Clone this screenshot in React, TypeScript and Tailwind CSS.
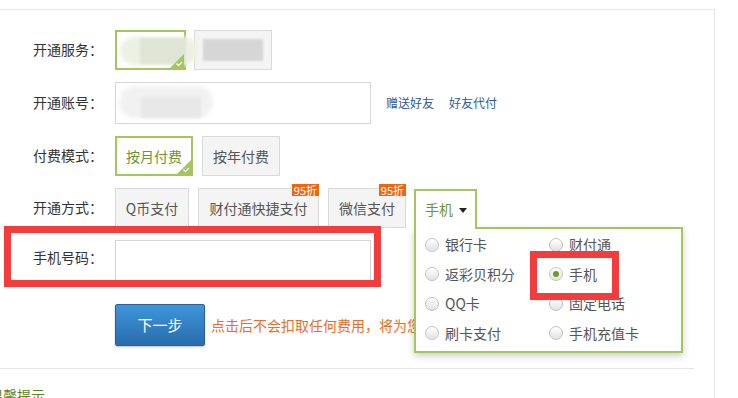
import React from "react";

const GREEN = "border-[#a3c65e]";

const Corner: React.FC = () => (
  <svg className="absolute right-0 bottom-0" width="14" height="14" viewBox="0 0 14 14">
    <polygon points="14,0 14,14 0,14" fill="#a3c65e" />
    <polyline points="6.5,9.5 8.5,11.5 12,8" fill="none" stroke="#fff" strokeWidth="1.3" />
  </svg>
);

const Badge: React.FC = () => (
  <span className="absolute right-[-1px] top-[-5px] h-[12px] px-[2px] bg-[#f0650e] text-white text-[11px] leading-[12px]">
    95折
  </span>
);

const Radio: React.FC<{ label: string; checked?: boolean }> = ({ label, checked }) => (
  <div className="flex items-center h-[29.5px]">
    <span className="w-[14px] h-[14px] rounded-full border border-[#c2c2c2] bg-linear-to-b from-white to-[#e2e2e2] flex items-center justify-center">
      {checked && <span className="w-[6px] h-[6px] rounded-full bg-[#6b9a2a]" />}
    </span>
    <span className="ml-[6px] text-[14px] text-[#555]">{label}</span>
  </div>
);

const Label: React.FC<{ text: string; up?: string }> = ({ text, up = "-mt-[2px]" }) => (
  <div className={`w-[115px] pl-[33px] text-[14px] text-[#333] shrink-0 ${up}`}>{text}</div>
);

const Opt: React.FC<{ text: string; w: string; badge?: boolean }> = ({ text, w, badge }) => (
  <div
    className={`relative ${w} h-[40px] flex items-center justify-center border border-[#dadada] bg-[#f4f4f4] text-[14px] text-[#555]`}
  >
    {text}
    {badge && <Badge />}
  </div>
);

export default function App() {
  const radios: [string, boolean][] = [
    ["银行卡", false],
    ["财付通", false],
    ["返彩贝积分", false],
    ["手机", true],
    ["QQ卡", false],
    ["固定电话", false],
    ["刷卡支付", false],
    ["手机充值卡", false],
  ];

  return (
    <div className="relative w-[738px] h-[398px] overflow-hidden bg-white font-['Microsoft_YaHei','Noto_Sans_CJK_SC',sans-serif]">
      <div className="mt-[9px] w-[715px] h-[389px] border-t border-r border-[#e6e6e6]">
        <div className="pt-[20px]">
          {/* 开通服务 */}
          <div className="flex items-center h-[40px]">
            <Label text="开通服务：" />
            <div className={`relative w-[71px] h-[40px] border-2 ${GREEN} bg-white`}>
              <div className="absolute left-[3px] top-[5px] w-[78px] h-[28px] rounded-full bg-[#edf1e3] blur-[2px]" />
              <div className="absolute left-[23px] top-[6px] w-[46px] h-[26px] bg-[#dfe4d5] blur-[1px]" />
              <Corner />
            </div>
            <div className="ml-[8px] w-[78px] h-[40px] border border-[#dadada] bg-[#f4f4f4] flex items-center justify-center">
              <div className="w-[60px] h-[22px] bg-[#d6d6d6] blur-[1px]" />
            </div>
          </div>

          {/* 开通账号 */}
          <div className="flex items-center h-[42px] mt-[12px]">
            <Label text="开通账号：" />
            <div className="relative w-[256px] h-[42px] border border-[#d6d6d6] bg-white">
              <div className="absolute left-[3px] top-[3px] w-[94px] h-[32px] rounded-full bg-[#f1f1f1] blur-[2px]" />
              <div className="absolute left-[25px] top-[14px] w-[60px] h-[21px] bg-[#e8e8e8] blur-[1px]" />
            </div>
            <a className="ml-[15px] text-[12px] text-[#2b5a97]">赠送好友</a>
            <a className="ml-[15px] text-[12px] text-[#2b5a97]">好友代付</a>
          </div>

          {/* 付费模式 */}
          <div className="flex items-center h-[40px] mt-[12px]">
            <Label text="付费模式：" />
            <div
              className={`relative w-[78px] h-[40px] border-2 ${GREEN} bg-white flex items-center justify-center text-[14px] text-[#6a9535]`}
            >
              按月付费
              <Corner />
            </div>
            <div className="ml-[9px]">
              <Opt text="按年付费" w="w-[78px]" />
            </div>
          </div>

          {/* 开通方式 */}
          <div className="flex items-start h-[40px] mt-[12px]">
            <div className="h-[40px] flex items-center">
              <Label text="开通方式：" />
            </div>
            <div className="flex gap-[9px]">
              <Opt text="Q币支付" w="w-[74px]" />
              <Opt text="财付通快捷支付" w="w-[121px]" badge />
              <Opt text="微信支付" w="w-[78px]" badge />
            </div>
            <div className="relative ml-[8px] mt-[1px]">
              <div
                className={`relative z-20 w-[63px] h-[40px] border-2 border-b-0 ${GREEN} bg-white flex items-center pl-[9px]`}
              >
                <span className="text-[14px] text-[#6a9535] -mt-[2px]">手机</span>
                <span className="ml-[6px] w-0 h-0 border-l-[4px] border-r-[4px] border-t-[5px] border-l-transparent border-r-transparent border-t-[#222]" />
              </div>
              <div
                className={`absolute z-10 left-0 top-[38px] w-[269px] h-[126px] border-2 ${GREEN} bg-white shadow-[0_3px_7px_rgba(0,0,0,0.2)] pl-[9px] pt-[1px]`}
              >
                <div className="grid grid-cols-[124px_124px]">
                  {radios.map(([l, c]) => (
                    <Radio key={l} label={l} checked={c} />
                  ))}
                </div>
              </div>
            </div>
          </div>

          {/* 手机号码 */}
          <div className="flex items-center h-[42px] mt-[12px]">
            <Label text="手机号码：" up="-mt-[8px]" />
            <div className="w-[256px] h-[42px] border border-[#d6d6d6] bg-white" />
          </div>

          {/* 下一步 */}
          <div className="flex items-center h-[42px] mt-[22px]">
            <div className="w-[115px] shrink-0" />
            <button className="w-[90px] h-[42px] rounded-[2px] border border-[#2a5f99] bg-linear-to-b from-[#3d96d8] to-[#2a6cae] text-white text-[15px] shadow-[0_1px_2px_rgba(0,0,0,0.25)]">
              下一步
            </button>
            <span className="ml-[6px] text-[14px] text-[#ef6c1f] whitespace-nowrap">
              点击后不会扣取任何费用，将为您开通服务
            </span>
          </div>

          <div className="mt-[22px] w-[694px] border-t border-[#e6e6e6]" />
          <div className="mt-[16px] ml-[-11px] text-[14px] text-[#5f7f1c] whitespace-nowrap">温馨提示</div>
        </div>
      </div>

      {/* annotation boxes */}
      <div className="absolute z-30 left-[4px] top-[226px] w-[377px] h-[61px] border-[7px] border-[#f53c3c]" />
      <div className="absolute z-30 left-[530px] top-[251px] w-[89px] h-[49px] border-[7px] border-[#f53c3c]" />
    </div>
  );
}
